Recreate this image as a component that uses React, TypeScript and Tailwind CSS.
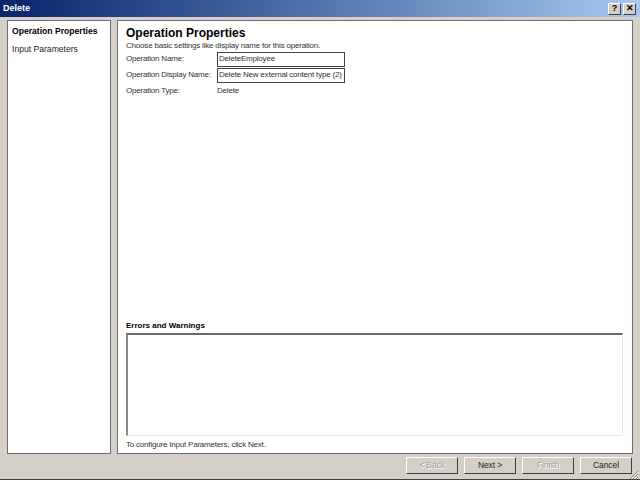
const ui = { fontFamily: '"Liberation Sans", Arial, sans-serif' }

function TitleButton({ children }: { children: React.ReactNode }) {
  return (
    <div className="w-[13px] h-[12px] bg-[#d4d0c8] border border-t-white border-l-white border-b-[#404040] border-r-[#404040] flex items-center justify-center text-[9px] font-bold leading-none text-black">
      {children}
    </div>
  )
}

function Button({ label, disabled }: { label: string; disabled?: boolean }) {
  return (
    <div
      className={
        'w-[52px] h-[17px] bg-[#d4d0c8] border border-t-white border-l-white border-b-[#404040] border-r-[#404040] flex items-center justify-center text-[8.5px] tracking-[-0.1px] ' +
        (disabled ? 'text-[#a0a0a0] [text-shadow:1px_1px_0_#fff]' : 'text-[#222]')
      }
    >
      {label}
    </div>
  )
}

function Field({ label, value }: { label: string; value: string }) {
  return (
    <div className="flex items-center h-[16px]">
      <div className="w-[91px] text-[#333] whitespace-nowrap">{label}</div>
      <div className="w-[128px] h-[15px] border border-[#444] bg-white flex items-center px-[1px] text-[#333] overflow-hidden whitespace-nowrap">
        {value}
      </div>
    </div>
  )
}

export default function App() {
  return (
    <div className="w-[640px] h-[480px] bg-[#d4d0c8] flex flex-col border-b border-[#404040] text-[8px] tracking-[-0.2px]" style={ui}>
      <div className="h-[17px] flex items-center justify-between pl-[3px] pr-[4px] bg-gradient-to-r from-[#0a246a] to-[#a6caf0]">
        <span className="text-white font-bold text-[9px] tracking-normal">Delete</span>
        <div className="flex gap-[2px]">
          <TitleButton>?</TitleButton>
          <TitleButton>✕</TitleButton>
        </div>
      </div>

      <div className="flex-1 flex flex-col px-[7px] pt-[3px]">
        <div className="flex gap-[6px] h-[434px]">
          <div className="w-[104px] bg-white border border-[#6f6f6f] px-[4px] pt-[5px] flex flex-col gap-[7px] text-[#222] text-[8.6px] tracking-normal leading-[11px]">
            <div className="font-bold text-black">Operation Properties</div>
            <div>Input Parameters</div>
          </div>

          <div className="flex-1 bg-white border border-[#6f6f6f] flex flex-col pl-[8px] pr-[9px] pt-[5px] pb-[3px]">
            <div className="text-[12px] font-bold text-black leading-[15px] tracking-normal">Operation Properties</div>
            <div className="text-[#333] leading-[10px]">Choose basic settings like display name for this operation.</div>
            <div className="flex flex-col">
              <Field label="Operation Name:" value="DeleteEmployee" />
              <Field label="Operation Display Name:" value="Delete New external content type (2)" />
              <div className="flex items-center h-[16px]">
                <div className="w-[91px] text-[#333]">Operation Type:</div>
                <div className="text-[#333]">Delete</div>
              </div>
            </div>

            <div className="flex-1" />

            <div className="font-bold text-black leading-[10px] tracking-normal">Errors and Warnings</div>
            <div className="h-[103px] mt-[2px] bg-white border-t-2 border-l-2 border-t-[#6a6a6a] border-l-[#8a8a8a] border-b border-r border-b-[#e8e8e8] border-r-[#e8e8e8]" />
            <div className="text-[#333] mt-[3px] leading-[11px]">To configure Input Parameters, click Next.</div>
          </div>
        </div>

        <div className="flex justify-end gap-[6px] mt-[3px] pr-[1px] relative">
          <Button label="< Back" disabled />
          <Button label="Next >" />
          <Button label="Finish" disabled />
          <Button label="Cancel" />
          <svg className="absolute right-[-6px] bottom-[-6px]" width="10" height="10" viewBox="0 0 10 10">
            <path d="M9 1 L1 9 M9 4 L4 9 M9 7 L7 9" stroke="#808080" strokeWidth="1" />
            <path d="M9 2 L2 9 M9 5 L5 9 M9 8 L8 9" stroke="#ffffff" strokeWidth="1" />
          </svg>
        </div>
      </div>
    </div>
  )
}
